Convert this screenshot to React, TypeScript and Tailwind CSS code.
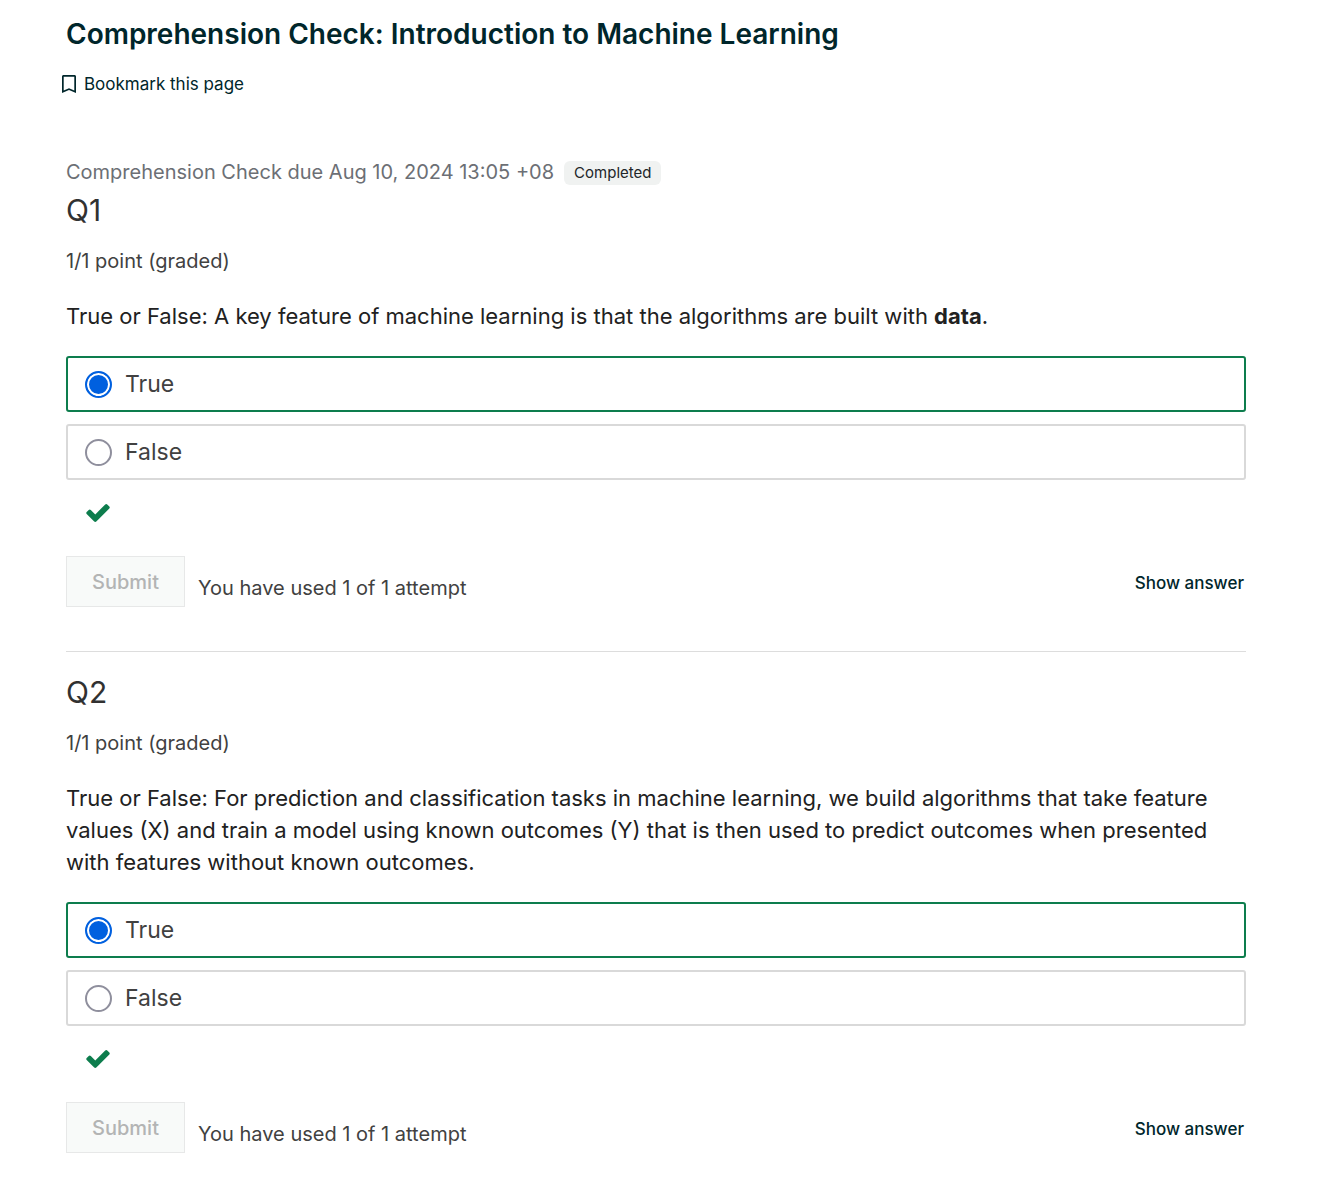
import { ReactNode } from "react";

function Option({ name, label, correct }: { name: string; label: string; correct?: boolean }) {
  return (
    <label
      className={`flex h-14 items-center gap-[13px] rounded-[3px] border-2 pl-[17px] text-[23px] text-[#414141] ${
        correct ? "border-[#0d7d4d]" : "border-[#d9d9d9]"
      }`}
    >
      <input
        type="radio"
        name={name}
        defaultChecked={correct}
        className="size-[27px] shrink-0 appearance-none rounded-full border-2 border-[#8f8f9d] bg-white checked:border-[#0060df] checked:bg-[#0060df] checked:shadow-[inset_0_0_0_2px_white]"
      />
      <span>{label}</span>
    </label>
  );
}

function Problem({ id, title, children }: { id: string; title: string; children: ReactNode }) {
  return (
    <section>
      <h2 className="text-3xl leading-9 text-[#313131]">{title}</h2>
      <p className="mt-[19px] text-xl leading-7 text-[#414141]">1/1 point (graded)</p>
      <fieldset className="mt-[25px]">
        <legend className="mb-6 text-[22px] leading-8 text-[#212121]">{children}</legend>
        <div className="flex flex-col gap-3">
          <Option name={id} label="True" correct />
          <Option name={id} label="False" />
        </div>
      </fieldset>
      <svg viewBox="121 334 1550 1188" className="mt-6 ml-5 h-[18px] w-6" role="img" aria-label="Correct">
        <path
          d="M1671 566q0 40-28 68l-724 724-136 136q-28 28-68 28t-68-28l-136-136-362-362q-28-28-28-68t28-68l136-136q28-28 68-28t68 28l294 295 656-657q28-28 68-28t68 28l136 136q28 28 28 68z"
          fill="#0d7d4d"
        />
      </svg>
      <div className="mt-[34px] flex items-center">
        <button
          disabled
          className="h-[51px] w-[119px] border border-[#e7e8e8] bg-[#f8faf9] text-xl font-medium text-[#b3b4b4]"
        >
          Submit
        </button>
        <span className="mt-3 ml-[13px] text-xl text-[#414141]">You have used 1 of 1 attempt</span>
        <button className="mt-1 mr-0.5 ml-auto text-[17px] font-medium text-[#00262b]">Show answer</button>
      </div>
    </section>
  );
}

export default function App() {
  return (
    <main className="min-h-screen bg-white pt-4 pr-[81px] pb-11 pl-[66px] font-['Inter',sans-serif]">
      <h1 className="text-[28px] leading-9 font-semibold text-[#00262b]">
        Comprehension Check: Introduction to Machine Learning
      </h1>
      <button className="mt-[18px] -ml-1 flex items-center gap-2 text-[17px] leading-7 text-[#00262b]">
        <svg viewBox="5 3 14 18" className="h-[18px] w-3.5" fill="currentColor" aria-hidden="true">
          <path d="M17.5 3h-11C5.7 3 5 3.7 5 4.5V21l7-3 7 3V4.500C19 3.700 18.300 3 17.500 3zM17.300 18.400L12 16.200l-5.300 2.200V4.700h10.600z" />
        </svg>
        Bookmark this page
      </button>
      <div className="mt-[60px] flex items-center gap-2.5">
        <p className="text-xl text-[#6c6f75]">Comprehension Check due Aug 10, 2024 13:05 +08</p>
        <span className="mt-0.5 rounded-md bg-[#f0f2f1] px-2.5 text-[15px] leading-6 text-[#212529]">Completed</span>
      </div>
      <div className="mt-1.5">
        <Problem id="q1" title="Q1">
          True or False: A key feature of machine learning is that the algorithms are built with <b>data</b>.
        </Problem>
      </div>
      <div className="mt-11 border-t border-[#ddd] pt-[22px]">
        <Problem id="q2" title="Q2">
          True or False: For prediction and classification tasks in machine learning, we build algorithms that take
          feature values (X) and train a model using known outcomes (Y) that is then used to predict outcomes when
          presented with features without known outcomes.
        </Problem>
      </div>
    </main>
  );
}
